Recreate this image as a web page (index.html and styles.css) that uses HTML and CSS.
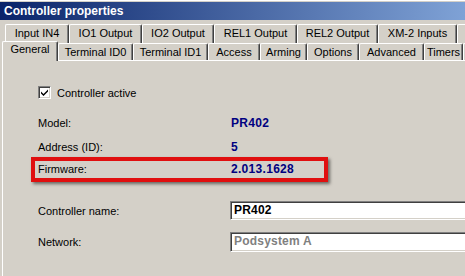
FILE: index.html
```html
<!DOCTYPE html>
<html>
<head>
<meta charset="utf-8">
<link rel="stylesheet" href="styles.css">
</head>
<body>
<div class="window">
  <div class="titlebar">Controller properties</div>
  <div class="tabs">
    <div class="tabrow back">
      <div class="tab w-in4">Input IN4</div>
      <div class="tab w-io1">IO1 Output</div>
      <div class="tab w-io2">IO2 Output</div>
      <div class="tab w-rel1">REL1 Output</div>
      <div class="tab w-rel2">REL2 Output</div>
      <div class="tab w-xm">XM-2 Inputs</div>
      <div class="tab w-more"></div>
    </div>
    <div class="tabrow front">
      <div class="tab active w-gen">General</div>
      <div class="tab w-tid0">Terminal ID0</div>
      <div class="tab w-tid1">Terminal ID1</div>
      <div class="tab w-acc">Access</div>
      <div class="tab w-arm">Arming</div>
      <div class="tab w-opt">Options</div>
      <div class="tab w-adv">Advanced</div>
      <div class="tab w-tim">Timers</div>
      <div class="tab w-more"></div>
    </div>
  </div>
  <div class="panel">
    <div class="check-row">
      <span class="checkbox">
        <svg width="9" height="9" viewBox="0 0 9 9"><path d="M1 3.5 L3.5 6 L8 1.5 L8 3.5 L3.5 8 L1 5.5 Z" fill="#000"/></svg>
      </span>
      <span>Controller active</span>
    </div>
    <div class="row model">
      <span class="label">Model:</span>
      <span class="value">PR402</span>
    </div>
    <div class="row addr">
      <span class="label">Address (ID):</span>
      <span class="value">5</span>
    </div>
    <div class="row firmware">
      <span class="label">Firmware:</span>
      <span class="value">2.013.1628</span>
    </div>
    <div class="row field name">
      <span class="label">Controller name:</span>
      <span class="input">PR402</span>
    </div>
    <div class="row field network">
      <span class="label">Network:</span>
      <span class="input disabled">Podsystem A</span>
    </div>
  </div>
</div>
</body>
</html>
```

FILE: styles.css
```css
html, body {
  margin: 0;
  padding: 0;
}
body {
  background: #d4d0c8;
  font-family: "Liberation Sans", Arial, sans-serif;
  font-size: 11px;
  color: #000;
  width: 465px;
  height: 276px;
  overflow: hidden;
}
.window {
  width: 465px;
  height: 276px;
  overflow: hidden;
  border-top: 1px solid #fff;
  box-sizing: border-box;
}
.titlebar {
  margin-top: 1px;
  height: 18px;
  line-height: 18px;
  padding-left: 4px;
  background: linear-gradient(to right, #0a246a, #7fa2d6);
  color: #fff;
  font-weight: bold;
  font-size: 12px;
  white-space: nowrap;
}
.tabs {
  padding-top: 4px;
}
.tabrow {
  display: flex;
  white-space: nowrap;
}
.back {
  padding-left: 5px;
  height: 19px;
}
.front {
  padding-left: 4px;
  height: 17px;
  align-items: flex-start;
}
.tab {
  flex: none;
  box-sizing: border-box;
  border-top: 1px solid #fff;
  border-left: 1px solid #fff;
  border-right: 1px solid #404040;
  box-shadow: inset -1px 0 #808080;
  border-radius: 2px 2px 0 0;
  text-align: center;
  background: #d4d0c8;
}
.back .tab {
  height: 19px;
  line-height: 17px;
}
.front .tab {
  height: 17px;
  line-height: 16px;
}
.front .tab.active {
  height: 20px;
  margin-top: -2px;
  margin-left: -2px;
  line-height: 15px;
  position: relative;
  z-index: 1;
}
.w-in4 { width: 64px; }
.w-io1 { width: 73px; }
.w-io2 { width: 72px; }
.w-rel1 { width: 83px; }
.w-rel2 { width: 81px; }
.w-xm { width: 79px; }
.w-more { width: 40px; }
.w-gen { width: 56px; }
.w-tid0 { width: 75px; }
.w-tid1 { width: 75px; }
.w-acc { width: 52px; }
.w-arm { width: 47px; }
.w-opt { width: 52px; }
.w-adv { width: 65px; }
.w-tim { width: 39px; }

.panel {
  margin-left: 2px;
  border-top: 1px solid #fff;
  border-left: 1px solid #fff;
  height: 220px;
  padding: 25px 0 0 35px;
}
.check-row {
  display: flex;
  align-items: center;
  gap: 6px;
  height: 13px;
}
.checkbox {
  box-sizing: border-box;
  width: 13px;
  height: 13px;
  background: #fff;
  border-top: 1px solid #808080;
  border-left: 1px solid #808080;
  border-right: 1px solid #fff;
  border-bottom: 1px solid #fff;
  box-shadow: inset 1px 1px #404040, inset -1px -1px #d4d0c8;
  display: flex;
  align-items: center;
  justify-content: center;
}
.checkbox svg {
  display: block;
}
.row {
  display: flex;
  height: 16px;
  line-height: 16px;
  white-space: nowrap;
}
.label {
  width: 193px;
  flex: none;
}
.value {
  color: #000080;
  font-weight: bold;
  font-size: 12px;
  letter-spacing: 0.3px;
}
.model {
  margin-top: 16px;
}
.addr {
  margin-top: 8px;
}
.firmware {
  box-sizing: border-box;
  margin-top: 2px;
  margin-left: -7px;
  width: 297px;
  height: 25px;
  line-height: 17px;
  padding-left: 3px;
  border: 4px solid #e00f0f;
  box-shadow: 2px 2px 3px rgba(0, 0, 0, 0.5);
}
.field {
  align-items: center;
}
.field .label {
  width: 192px;
}
.name {
  margin-top: 19px;
  height: 19px;
}
.network {
  margin-top: 12px;
  height: 20px;
}
.input {
  box-sizing: border-box;
  flex: none;
  width: 250px;
  height: 100%;
  background: #fff;
  border-top: 1px solid #808080;
  border-left: 1px solid #808080;
  border-bottom: 1px solid #fff;
  border-right: 1px solid #fff;
  box-shadow: inset 1px 1px #404040, inset 0 -1px #d4d0c8;
  padding-left: 3px;
  font-weight: bold;
  font-size: 12px;
  line-height: 17px;
  letter-spacing: 0.2px;
}
.input.disabled {
  color: #808080;
}
```
